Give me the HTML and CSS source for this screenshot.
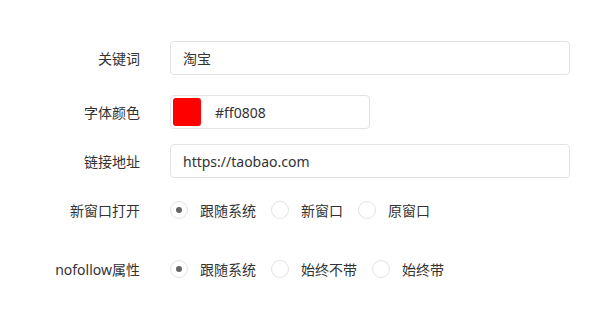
FILE: index.html
```html
<!DOCTYPE html>
<html lang="zh-CN">
<head>
  <meta charset="UTF-8" />
  <title>链接设置</title>
  <link rel="stylesheet" href="styles.css">
</head>
<body>
  <form class="form">
    <div class="row">
      <label class="label">关键词</label>
      <input class="input wide" type="text" value="淘宝">
    </div>

    <div class="row row-color">
      <label class="label">字体颜色</label>
      <div class="input color-box">
        <span class="swatch"></span>
        <span class="color-text">#ff0808</span>
      </div>
    </div>

    <div class="row row-link">
      <label class="label">链接地址</label>
      <input class="input wide" type="text" value="https://taobao.com">
    </div>

    <div class="row row-target">
      <label class="label">新窗口打开</label>
      <div class="radios">
        <span class="radio checked"><i></i>跟随系统</span>
        <span class="radio"><i></i>新窗口</span>
        <span class="radio"><i></i>原窗口</span>
      </div>
    </div>

    <div class="row row-follow">
      <label class="label">nofollow属性</label>
      <div class="radios">
        <span class="radio checked"><i></i>跟随系统</span>
        <span class="radio"><i></i>始终不带</span>
        <span class="radio"><i></i>始终带</span>
      </div>
    </div>
  </form>
</body>
</html>
```

FILE: styles.css
```css
:root {
  --text: #333;
  --border: #e3e3e6;
}

body {
  margin: 0;
  background: #fff;
  color: var(--text);
  font-family: "Noto Sans", "Noto Sans CJK SC", sans-serif;
  font-size: 14px;
}

.form {
  display: flex;
  flex-direction: column;
  padding-top: 41px;
}

.row {
  display: flex;
  align-items: center;
  gap: 30px;
  height: 34px;
}

.row-color  { margin-top: 20px; }
.row-link   { margin-top: 15px; }
.row-target { margin-top: 15px; }
.row-follow { margin-top: 25px; }

.label {
  width: 140px;
  text-align: right;
  font-size: 14px;
  color: #333;
}

.input {
  box-sizing: border-box;
  height: 34px;
  border: 1px solid var(--border);
  border-radius: 4px;
  padding: 0 12px;
  font: inherit;
  color: var(--text);
  background: #fff;
  outline: none;
}

.wide { width: 400px; }

.color-box {
  width: 200px;
  display: flex;
  align-items: center;
  gap: 14px;
  padding: 0 2px;
}

.swatch {
  width: 28px;
  height: 28px;
  border-radius: 3px;
  background: #ff0000;
}

.radios {
  display: flex;
  align-items: center;
}

.radio {
  display: flex;
  align-items: center;
  gap: 12px;
  margin-right: 15px;
}

.radio i {
  box-sizing: border-box;
  width: 18px;
  height: 18px;
  border: 1px solid var(--border);
  border-radius: 50%;
  display: flex;
  align-items: center;
  justify-content: center;
}

.radio.checked i::after {
  content: "";
  width: 6px;
  height: 6px;
  border-radius: 50%;
  background: #666;
}
```
